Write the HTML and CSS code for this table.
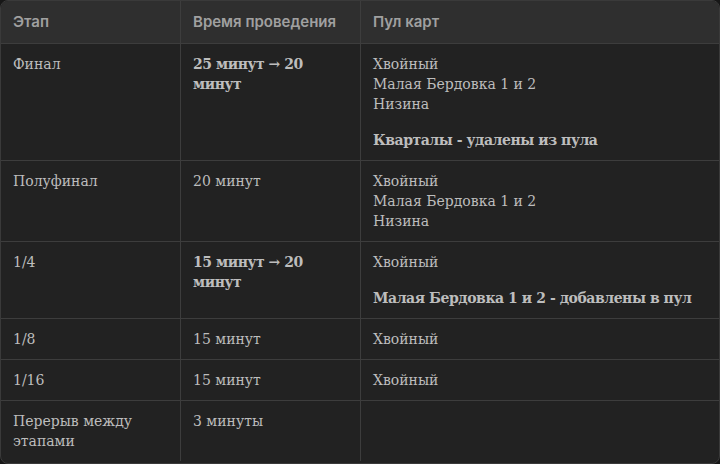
FILE: index.html
```html
<!DOCTYPE html>
<html lang="ru">
<head>
<meta charset="utf-8">
<link rel="stylesheet" href="styles.css">
</head>
<body>
<div class="wrap">
<table class="grid">
<colgroup><col class="c1"><col class="c2"><col class="c3"></colgroup>
<thead>
<tr><th>Этап</th><th>Время проведения</th><th>Пул карт</th></tr>
</thead>
<tbody>
<tr>
<td>Финал</td>
<td><b>25 минут → 20 минут</b></td>
<td><p>Хвойный<br>Малая Бердовка 1 и 2<br>Низина</p><p><b>Кварталы - удалены из пула</b></p></td>
</tr>
<tr>
<td>Полуфинал</td>
<td>20 минут</td>
<td><p>Хвойный<br>Малая Бердовка 1 и 2<br>Низина</p></td>
</tr>
<tr>
<td>1/4</td>
<td><b>15 минут → 20 минут</b></td>
<td><p>Хвойный</p><p><b>Малая Бердовка 1 и 2 - добавлены в пул</b></p></td>
</tr>
<tr>
<td>1/8</td>
<td>15 минут</td>
<td>Хвойный</td>
</tr>
<tr>
<td>1/16</td>
<td>15 минут</td>
<td>Хвойный</td>
</tr>
<tr class="last">
<td>Перерыв между этапами</td>
<td>3 минуты</td>
<td></td>
</tr>
</tbody>
</table>
</div>
</body>
</html>
```
FILE: styles.css
```css
html, body {
  margin: 0;
  padding: 0;
  background: #171717;
}
.wrap {
  width: 720px;
  height: 464px;
  box-sizing: border-box;
  border: 1px solid #3a3a3a;
  border-radius: 8px;
  overflow: hidden;
  background: #222222;
}
.grid {
  width: 100%;
  border-collapse: separate;
  border-spacing: 0;
  table-layout: fixed;
}
.c1 { width: 180px; }
.c2 { width: 180px; }
.c3 { width: auto; }
th {
  background: #2f2f2f;
  color: #a0a0a0;
  font-family: Inter, "Noto Sans", sans-serif;
  font-weight: 600;
  font-size: 15px;
  line-height: 20px;
  text-align: left;
  padding: 11px 12px 11px 12px;
  border-bottom: 1px solid #3d3d3d;
  border-right: 1px solid #3d3d3d;
}
td {
  color: #bdbdbd;
  font-family: "DejaVu Serif", serif;
  font-size: 14px;
  line-height: 20px;
  vertical-align: top;
  padding: 10px 12px 10px 12px;
  border-bottom: 1px solid #3d3d3d;
  border-right: 1px solid #3d3d3d;
}
th:last-child, td:last-child { border-right: 0; }
.last td { border-bottom: 0; height: 40px; }
td p { margin: 0; }
td p + p { margin-top: 16px; }
b { font-weight: 700; letter-spacing: -0.45px; }
```
